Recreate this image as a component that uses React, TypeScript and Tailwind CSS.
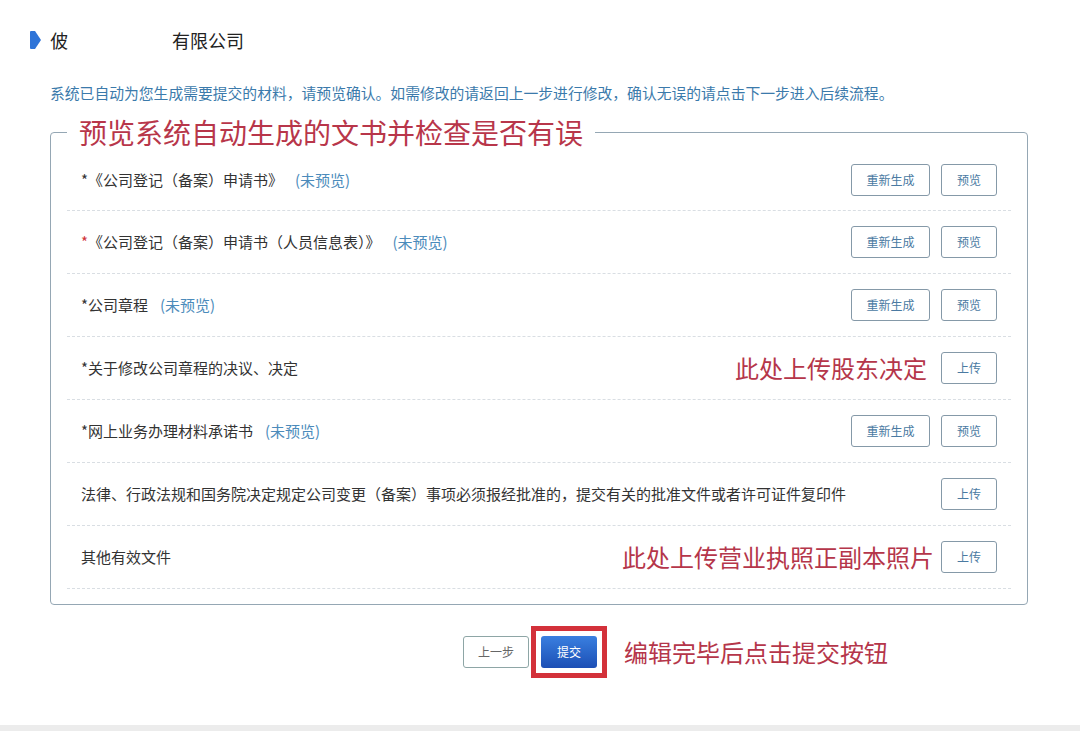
import React from 'react';

type Row = {
  label: string;
  star?: 'red' | 'dark';
  pending?: boolean;
  actions: 'gen' | 'upload';
  note?: string;
  noteGap?: string;
};

const rows: Row[] = [
  { label: '《公司登记（备案）申请书》', star: 'dark', pending: true, actions: 'gen' },
  { label: '《公司登记（备案）申请书（人员信息表）》', star: 'red', pending: true, actions: 'gen' },
  { label: '公司章程', star: 'dark', pending: true, actions: 'gen' },
  { label: '关于修改公司章程的决议、决定', star: 'dark', actions: 'upload', note: '此处上传股东决定', noteGap: 'mr-[14px]' },
  { label: '网上业务办理材料承诺书', star: 'dark', pending: true, actions: 'gen' },
  {
    label: '法律、行政法规和国务院决定规定公司变更（备案）事项必须报经批准的，提交有关的批准文件或者许可证件复印件',
    actions: 'upload'
  },
  { label: '其他有效文件', actions: 'upload', note: '此处上传营业执照正副本照片', noteGap: 'mr-[7px]' }
];

function SmallButton({ children, wide }: { children: React.ReactNode; wide?: boolean }) {
  return (
    <button
      className={`h-[32px] ${wide ? 'w-[79px]' : 'w-[56px]'} rounded-[3px] border border-[#8599a8] bg-white text-[12px] text-[#4a7aa2]`}
    >
      {children}
    </button>
  );
}

export default function App() {
  return (
    <div
      className="flex min-h-[731px] flex-col bg-white text-[#333]"
      style={{ fontFamily: '"Noto Sans CJK SC", "Noto Sans", sans-serif' }}
    >
      <div className="flex-1 pl-[30px] pr-[52px]">
        <div className="flex h-[22px] items-center pt-0 mt-[29px]">
          <svg width="11" height="18" viewBox="0 0 11 18" className="shrink-0">
            <path d="M1 0 H5 L11 9 L5 18 H1 Q0 18 0 17 V1 Q0 0 1 0 Z" fill="#2f74d8" />
          </svg>
          <span className="ml-[9px] text-[18px] leading-[22px] text-[#222]">佊</span>
          <span className="ml-[104px] text-[18px] leading-[22px] text-[#222]">有限公司</span>
        </div>

        <p className="ml-[20px] mt-[32px] text-[14.8px] leading-[20px] text-[#3b7aab]">
          系统已自动为您生成需要提交的材料，请预览确认。如需修改的请返回上一步进行修改，确认无误的请点击下一步进入后续流程。
        </p>

        <fieldset className="ml-[20px] mt-[12px] rounded-[4px] border border-[#95a7b4] px-[16px] pb-[15px]">
          <legend className="ml-[0px] px-[12px] text-[28px] leading-[34px] text-[#b8364a]">
            预览系统自动生成的文书并检查是否有误
          </legend>
          {rows.map((r, i) => (
            <div
              key={i}
              className={`flex items-center justify-between border-b border-dashed border-[#d9dee3] px-[14px] ${i === 0 ? 'h-[62px]' : 'h-[63px]'}`}
            >
              <div className="flex items-center text-[15px] leading-[20px] text-[#333]">
                {r.star && <span className={r.star === 'red' ? 'text-[#d0343a]' : 'text-[#333]'}>*</span>}
                <span>{r.label}</span>
                {r.pending && <span className="ml-[12px] text-[#4b8bbb]">(未预览)</span>}
              </div>
              <div className="flex items-center">
                {r.note && (
                  <span className={`${r.noteGap} text-[24px] leading-[30px] text-[#b5364a]`}>{r.note}</span>
                )}
                {r.actions === 'gen' ? (
                  <div className="flex gap-[11px]">
                    <SmallButton wide>重新生成</SmallButton>
                    <SmallButton>预览</SmallButton>
                  </div>
                ) : (
                  <SmallButton>上传</SmallButton>
                )}
              </div>
            </div>
          ))}
        </fieldset>

        <div className="mt-[21px] flex items-center pl-[433px]">
          <button className="h-[32px] w-[66px] rounded-[3px] border border-[#8ea6a6] bg-white text-[12px] text-[#666]">
            上一步
          </button>
          <div className="ml-[2px] border-[5px] border-[#d3313a] p-[5px]">
            <button className="block h-[32px] w-[56px] rounded-[3px] bg-gradient-to-b from-[#3a7fe0] to-[#1d4fb5] text-[12px] text-white">
              提交
            </button>
          </div>
          <span className="ml-[17px] text-[24px] leading-[30px] text-[#b5364a]">编辑完毕后点击提交按钮</span>
        </div>
      </div>
      <div className="h-[6px] bg-[#ececec]" />
    </div>
  );
}
